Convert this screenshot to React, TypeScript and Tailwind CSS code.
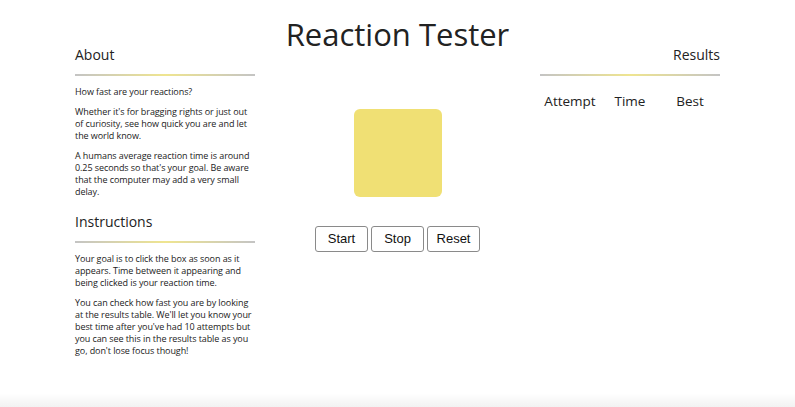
import React from 'react';

const Divider = (): JSX.Element => (
  <div className="h-[2px] w-full bg-[linear-gradient(to_right,#c4c4c4,#efe590_50%,#c4c4c4)]" />
);

const about = [
  'How fast are your reactions?',
  "Whether it's for bragging rights or just out of curiosity, see how quick you are and let the world know.",
  "A humans average reaction time is around 0.25 seconds so that's your goal. Be aware that the computer may add a very small delay.",
];

const instructions = [
  'Your goal is to click the box as soon as it appears. Time between it appearing and being clicked is your reaction time.',
  "You can check how fast you are by looking at the results table. We'll let you know your best time after you've had 10 attempts but you can see this in the results table as you go, don't lose focus though!",
];

const Section = ({ title, paragraphs }: { title: string; paragraphs: string[] }): JSX.Element => (
  <div>
    <h2 className="text-[14px] leading-[20px] text-[#222]">{title}</h2>
    <div className="mt-[9px]">
      <Divider />
    </div>
    <div className="mt-[10px] flex flex-col gap-[8px]">
      {paragraphs.map((p) => (
        <p key={p} className="text-[9px] leading-[12px] tracking-[-0.08px] text-[#222]">
          {p}
        </p>
      ))}
    </div>
  </div>
);

export default function App(): JSX.Element {
  return (
    <div className="relative h-[407px] w-[795px] overflow-hidden bg-white font-['Open_Sans',sans-serif]">
      <h1 className="pt-[15px] text-center text-[31px] leading-[38px] text-[#222]">
        Reaction Tester
      </h1>
      <div className="mx-[75px] -mt-[8px] grid grid-cols-[180px_1fr_180px]">
        <div className="flex flex-col gap-[14px]">
          <Section title="About" paragraphs={about} />
          <Section title="Instructions" paragraphs={instructions} />
        </div>

        <div className="flex flex-col items-center pt-[64px]">
          <div className="h-[88px] w-[88px] rounded-[6px] bg-[#f0e074]" />
          <div className="mt-[29px] flex gap-[3px] font-['Liberation_Sans',sans-serif]">
            {['Start', 'Stop', 'Reset'].map((label) => (
              <button
                key={label}
                className="h-[26px] w-[53px] rounded-[3px] border border-[#8a8a8a] bg-white text-[13px] text-[#111]"
              >
                {label}
              </button>
            ))}
          </div>
        </div>

        <div>
          <h2 className="text-right text-[14px] leading-[20px] text-[#222]">Results</h2>
          <div className="mt-[9px]">
            <Divider />
          </div>
          <table className="mt-[15px] w-full table-fixed">
            <thead>
              <tr className="text-[13.5px] leading-[20px] text-[#222]">
                <th className="font-normal">Attempt</th>
                <th className="font-normal">Time</th>
                <th className="font-normal">Best</th>
              </tr>
            </thead>
          </table>
        </div>
      </div>
      <div className="absolute bottom-0 left-0 h-[14px] w-full bg-[linear-gradient(to_bottom,rgba(0,0,0,0),rgba(0,0,0,0.05))]" />
    </div>
  );
}
